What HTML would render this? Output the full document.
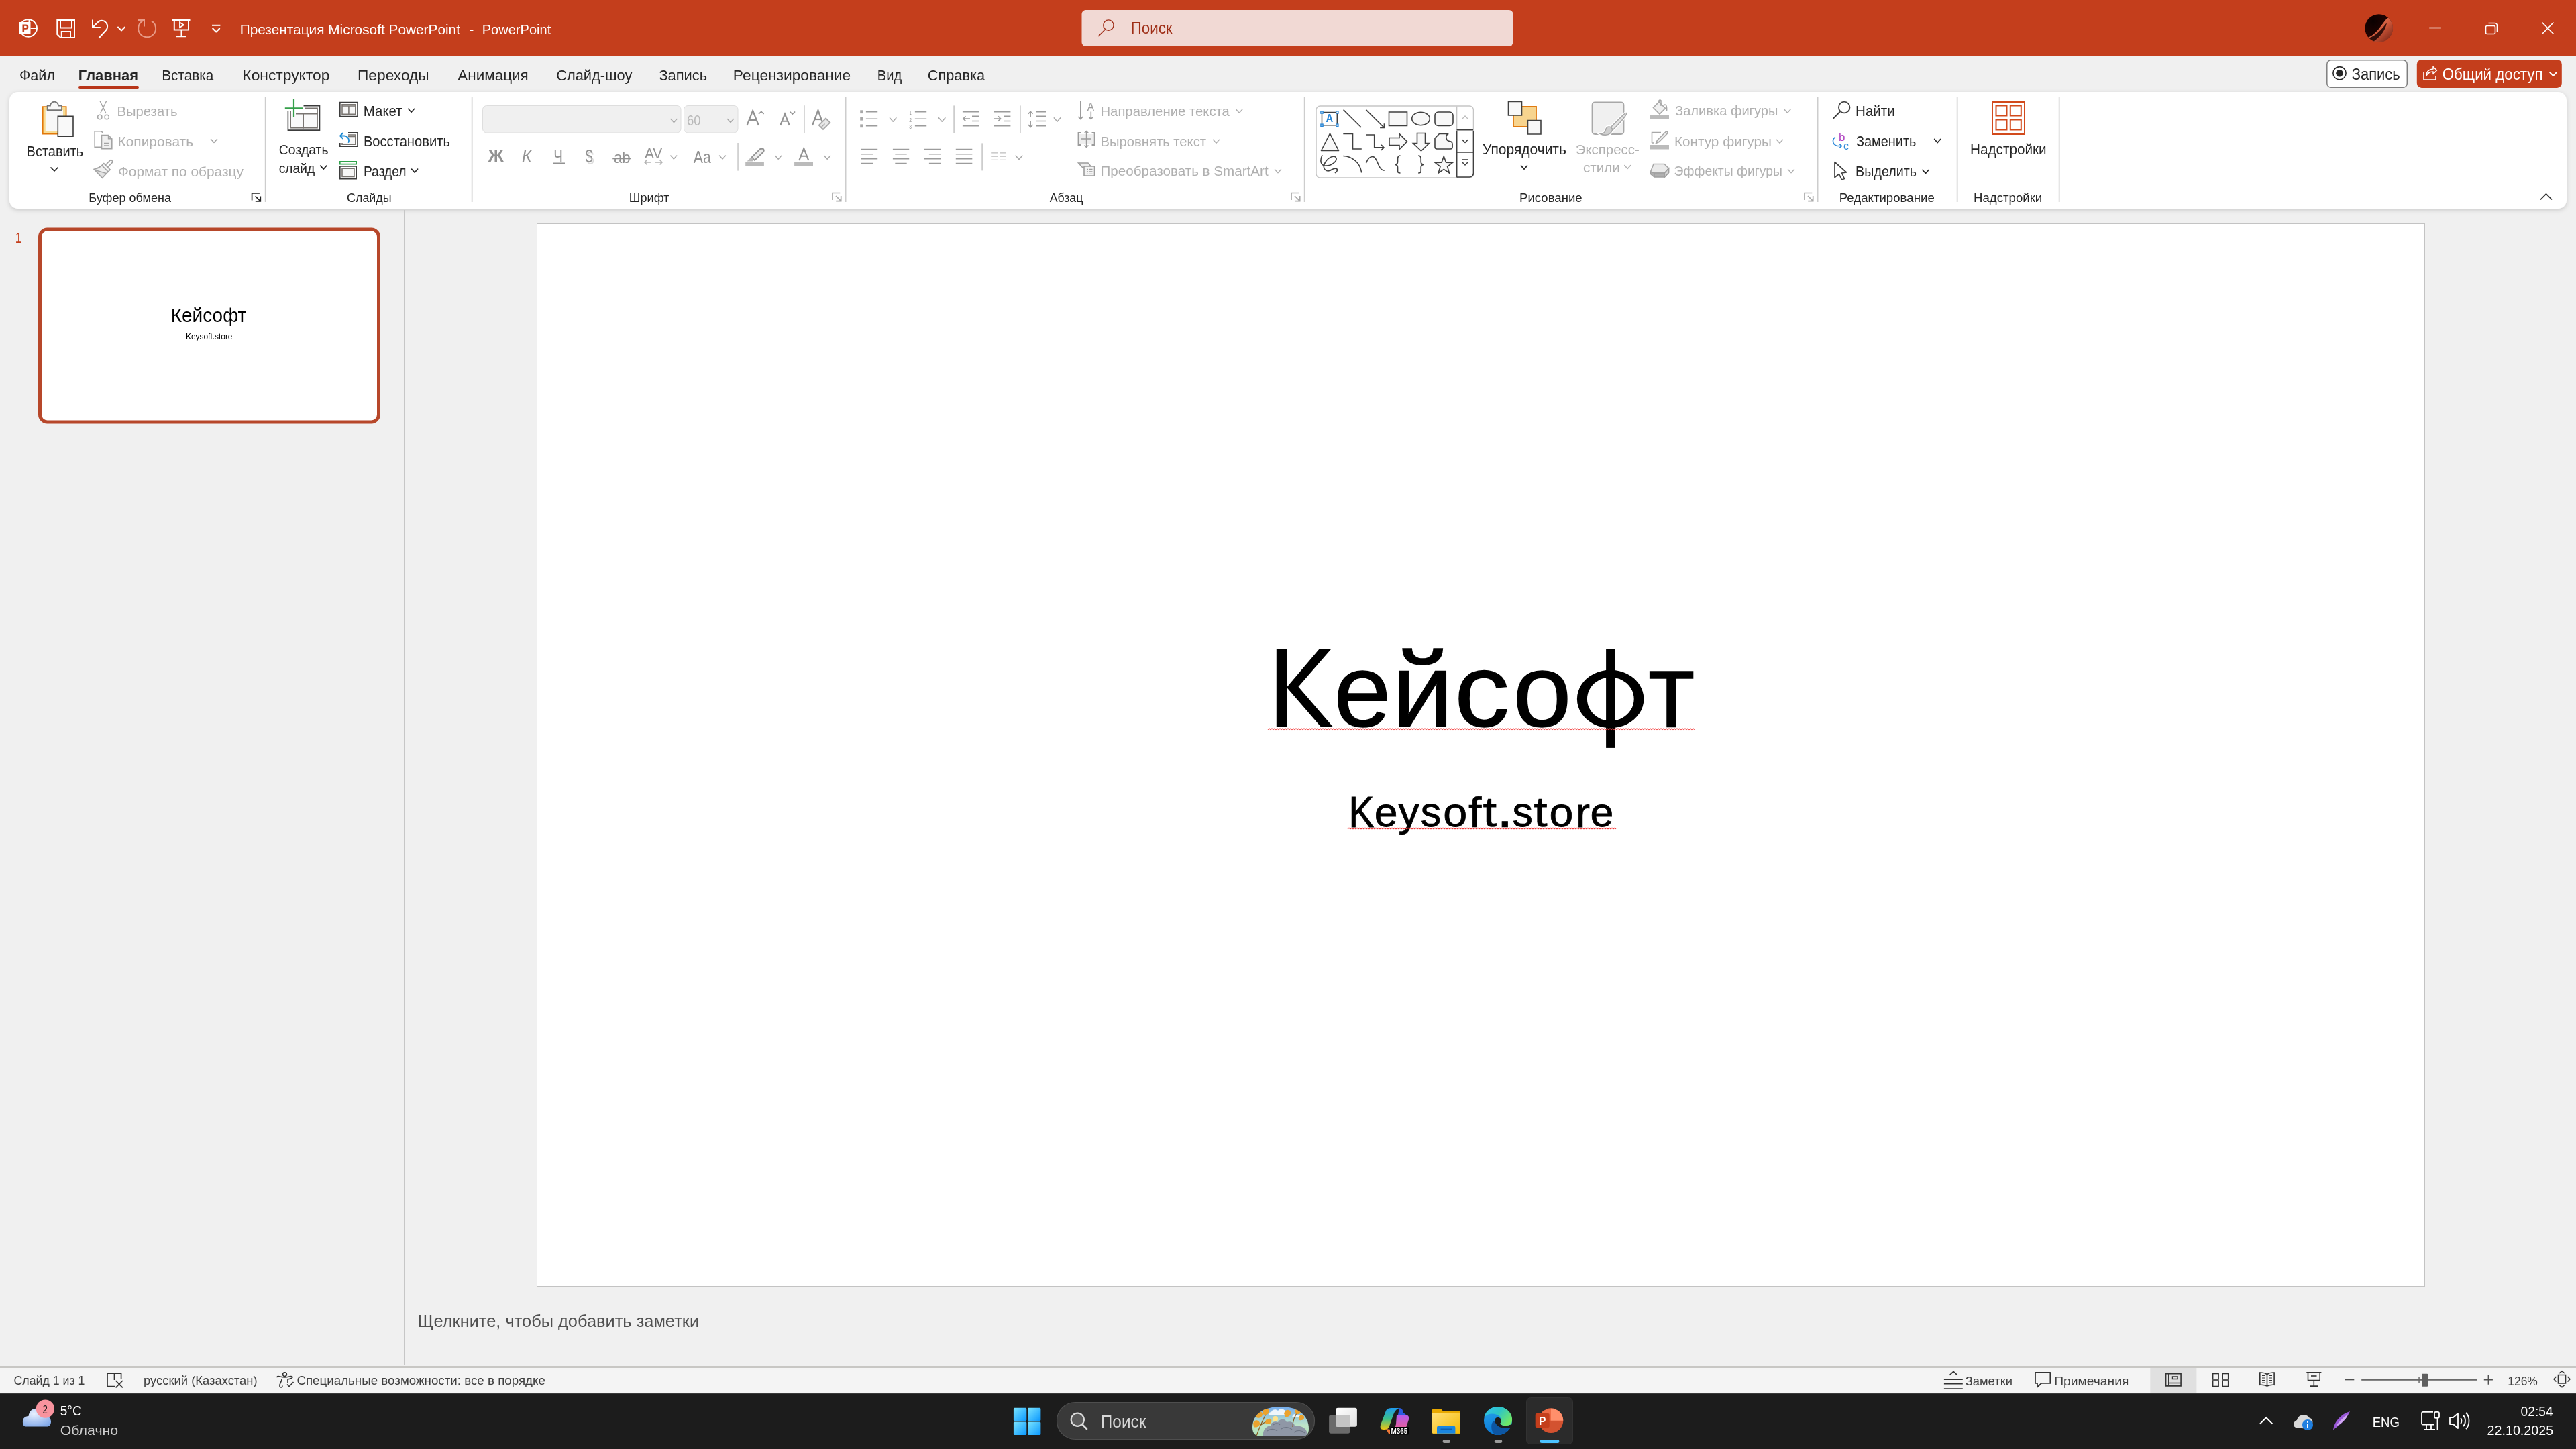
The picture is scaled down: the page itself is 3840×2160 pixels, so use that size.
<!DOCTYPE html>
<html><head><meta charset="utf-8"><style>
html,body{margin:0;padding:0;width:3840px;height:2160px;overflow:hidden;background:#F0F0F0}
svg{display:block;font-family:"Liberation Sans",sans-serif;will-change:transform}
</style></head><body>
<svg width="3840" height="2160" viewBox="0 0 3840 2160">
<defs>
<filter id="sh" x="-2%" y="-20%" width="104%" height="150%"><feDropShadow dx="0" dy="2" stdDeviation="3" flood-color="#000" flood-opacity="0.18"/></filter>
</defs>
<rect x="0" y="0" width="3840" height="2160" fill="#F0F0F0"/>
<rect x="0" y="0" width="3840" height="84" fill="#C43E1C"/>
<rect x="14" y="137" width="3812" height="174" rx="13" fill="#FFFFFF" filter="url(#sh)"/>
<rect x="602" y="313" width="1" height="1722" fill="#C6C6C6"/>
<rect x="800.5" y="333.5" width="2814" height="1584" fill="#FFFFFF" stroke="#C3C3C3" stroke-width="1"/>
<rect x="605" y="1942" width="3235" height="1" fill="#D2D2D2"/>
<rect x="0" y="2037" width="3840" height="2" fill="#C8C7C4"/>
<rect x="0" y="2039" width="3840" height="37" fill="#F4F4F4"/>
<rect x="0" y="2076" width="3840" height="84" fill="#1C1C1C"/>
<rect x="0" y="2076" width="3840" height="2" fill="#3A3A3A"/>
<text x="357.71" y="51.00" font-size="21" fill="#FFFFFF" textLength="328.29" lengthAdjust="spacingAndGlyphs">Презентация Microsoft PowerPoint</text>
<text x="700.00" y="51.00" font-size="21" fill="#FFFFFF" textLength="6.20" lengthAdjust="spacingAndGlyphs">-</text>
<text x="718.75" y="51.00" font-size="21" fill="#FFFFFF" textLength="102.47" lengthAdjust="spacingAndGlyphs">PowerPoint</text>
<rect x="1612.5" y="15" width="643" height="54" fill="#F1D9D4" rx="6"/>
<text x="1685.73" y="50.00" font-size="23" fill="#9E2E16" textLength="61.84" lengthAdjust="spacingAndGlyphs">Поиск</text>
<text x="28.90" y="119.70" font-size="22" fill="#262626" textLength="53.18" lengthAdjust="spacingAndGlyphs">Файл</text>
<text x="116.80" y="119.70" font-size="22" fill="#262626" font-weight="700" textLength="89.18" lengthAdjust="spacingAndGlyphs">Главная</text>
<text x="241.26" y="119.70" font-size="22" fill="#262626" textLength="77.09" lengthAdjust="spacingAndGlyphs">Вставка</text>
<text x="361.36" y="119.70" font-size="22" fill="#262626" textLength="129.99" lengthAdjust="spacingAndGlyphs">Конструктор</text>
<text x="532.97" y="119.70" font-size="22" fill="#262626" textLength="106.74" lengthAdjust="spacingAndGlyphs">Переходы</text>
<text x="682.32" y="119.70" font-size="22" fill="#262626" textLength="105.47" lengthAdjust="spacingAndGlyphs">Анимация</text>
<text x="829.20" y="119.70" font-size="22" fill="#262626" textLength="113.17" lengthAdjust="spacingAndGlyphs">Слайд-шоу</text>
<text x="982.40" y="119.70" font-size="22" fill="#262626" textLength="71.79" lengthAdjust="spacingAndGlyphs">Запись</text>
<text x="1092.87" y="119.70" font-size="22" fill="#262626" textLength="175.32" lengthAdjust="spacingAndGlyphs">Рецензирование</text>
<text x="1307.79" y="119.70" font-size="22" fill="#262626" textLength="36.34" lengthAdjust="spacingAndGlyphs">Вид</text>
<text x="1382.80" y="119.70" font-size="22" fill="#262626" textLength="85.22" lengthAdjust="spacingAndGlyphs">Справка</text>
<rect x="117" y="128" width="90" height="4" fill="#B8361A" rx="2"/>
<rect x="3468.8" y="89.8" width="119.5" height="40.5" fill="#FFFFFF" rx="6" stroke="#7E7E7E" stroke-width="1.5"/>
<rect x="3602.8" y="88.9" width="216" height="42" fill="#C43E1C" rx="7"/>
<text x="39.59" y="233.40" font-size="22" fill="#262626" textLength="84.65" lengthAdjust="spacingAndGlyphs">Вставить</text>
<text x="174.54" y="173.30" font-size="21" fill="#B0B0B0" textLength="89.95" lengthAdjust="spacingAndGlyphs">Вырезать</text>
<text x="175.50" y="217.70" font-size="21" fill="#B0B0B0" textLength="112.57" lengthAdjust="spacingAndGlyphs">Копировать</text>
<text x="176.00" y="262.80" font-size="21" fill="#B0B0B0" textLength="186.82" lengthAdjust="spacingAndGlyphs">Формат по образцу</text>
<text x="132.35" y="300.90" font-size="19" fill="#262626" textLength="122.70" lengthAdjust="spacingAndGlyphs">Буфер обмена</text>
<text x="415.80" y="229.70" font-size="21" fill="#262626" textLength="73.83" lengthAdjust="spacingAndGlyphs">Создать</text>
<text x="415.80" y="257.50" font-size="21" fill="#262626" textLength="53.27" lengthAdjust="spacingAndGlyphs">слайд</text>
<text x="541.87" y="173.10" font-size="22" fill="#262626" textLength="57.75" lengthAdjust="spacingAndGlyphs">Макет</text>
<text x="541.88" y="218.10" font-size="22" fill="#262626" textLength="129.00" lengthAdjust="spacingAndGlyphs">Восстановить</text>
<text x="541.92" y="262.80" font-size="22" fill="#262626" textLength="63.71" lengthAdjust="spacingAndGlyphs">Раздел</text>
<text x="517.00" y="300.90" font-size="19" fill="#262626" textLength="66.69" lengthAdjust="spacingAndGlyphs">Слайды</text>
<text x="937.74" y="300.90" font-size="19" fill="#262626" textLength="59.79" lengthAdjust="spacingAndGlyphs">Шрифт</text>
<text x="1564.63" y="300.90" font-size="19" fill="#262626" textLength="49.73" lengthAdjust="spacingAndGlyphs">Абзац</text>
<text x="1640.43" y="172.70" font-size="21" fill="#B0B0B0" textLength="192.48" lengthAdjust="spacingAndGlyphs">Направление текста</text>
<text x="1640.44" y="217.60" font-size="21" fill="#B0B0B0" textLength="157.67" lengthAdjust="spacingAndGlyphs">Выровнять текст</text>
<text x="1640.42" y="262.30" font-size="21" fill="#B0B0B0" textLength="250.32" lengthAdjust="spacingAndGlyphs">Преобразовать в SmartArt</text>
<text x="2210.00" y="230.00" font-size="22" fill="#262626" textLength="124.93" lengthAdjust="spacingAndGlyphs">Упорядочить</text>
<text x="2348.80" y="230.00" font-size="21" fill="#B0B0B0" textLength="94.96" lengthAdjust="spacingAndGlyphs">Экспресс-</text>
<text x="2360.00" y="257.00" font-size="21" fill="#B0B0B0" textLength="54.83" lengthAdjust="spacingAndGlyphs">стили</text>
<text x="2497.00" y="172.40" font-size="21" fill="#B0B0B0" textLength="153.36" lengthAdjust="spacingAndGlyphs">Заливка фигуры</text>
<text x="2496.01" y="217.80" font-size="21" fill="#B0B0B0" textLength="144.83" lengthAdjust="spacingAndGlyphs">Контур фигуры</text>
<text x="2495.60" y="261.70" font-size="21" fill="#B0B0B0" textLength="161.41" lengthAdjust="spacingAndGlyphs">Эффекты фигуры</text>
<text x="2265.02" y="300.90" font-size="19" fill="#262626" textLength="93.67" lengthAdjust="spacingAndGlyphs">Рисование</text>
<text x="2766.07" y="173.20" font-size="22" fill="#262626" textLength="58.66" lengthAdjust="spacingAndGlyphs">Найти</text>
<text x="2767.00" y="218.00" font-size="22" fill="#262626" textLength="89.39" lengthAdjust="spacingAndGlyphs">Заменить</text>
<text x="2766.11" y="263.00" font-size="22" fill="#262626" textLength="90.84" lengthAdjust="spacingAndGlyphs">Выделить</text>
<text x="2741.72" y="300.90" font-size="19" fill="#262626" textLength="142.04" lengthAdjust="spacingAndGlyphs">Редактирование</text>
<text x="2937.06" y="229.50" font-size="22" fill="#262626" textLength="113.62" lengthAdjust="spacingAndGlyphs">Надстройки</text>
<text x="2942.02" y="300.90" font-size="19" fill="#262626" textLength="102.23" lengthAdjust="spacingAndGlyphs">Надстройки</text>
<rect x="394.8" y="145" width="1.7" height="156" fill="#CDCDCD"/>
<rect x="702.8" y="145" width="1.7" height="156" fill="#CDCDCD"/>
<rect x="1259.8" y="145" width="1.7" height="156" fill="#CDCDCD"/>
<rect x="1943.8" y="145" width="1.7" height="156" fill="#CDCDCD"/>
<rect x="2708.8" y="145" width="1.7" height="156" fill="#CDCDCD"/>
<rect x="2916.8" y="145" width="1.7" height="156" fill="#CDCDCD"/>
<rect x="3068.8" y="145" width="1.7" height="156" fill="#CDCDCD"/>
<rect x="59.5" y="342" width="505" height="287" rx="11" fill="#FFFFFF" stroke="#B7472A" stroke-width="5"/>
<text x="22.81" y="361.70" font-size="22" fill="#C43E1C" textLength="9.69" lengthAdjust="spacingAndGlyphs">1</text>
<text x="254.73" y="479.70" font-size="30" fill="#000000" textLength="112.69" lengthAdjust="spacingAndGlyphs">Кейсофт</text>
<text x="277.00" y="505.50" font-size="13" fill="#000000" textLength="69.49" lengthAdjust="spacingAndGlyphs">Keysoft.store</text>
<path d="M1902.8,967.9 H1918.8 V1023.7 L1966.2,967.9 H1983.9 L1935.5,1023.7 L1987.4,1083.9 H1969.4 L1918.8,1025.6 V1083.9 H1902.8 Z" fill="#000"/>
<path d="M2400.65,998.7 A49.75,43.25 0 1 1 2400.64,998.7 Z M2400.8,1009.6 A34.9,32.45 0 1 0 2400.81,1009.6 Z" fill="#000" fill-rule="evenodd"/>
<rect x="2394.1" y="967.9" width="13.4" height="147" fill="#000"/>
<text transform="translate(1988.19,1082.95) scale(0.7677,0.7736)" x="0" y="0" font-size="200" fill="#000" stroke="#000" stroke-width="1.82">е</text>
<text transform="translate(2074.20,1083.30) scale(0.8286,0.7826)" x="0" y="0" font-size="200" fill="#000" stroke="#000" stroke-width="1.69">й</text>
<text transform="translate(2168.00,1082.95) scale(0.8221,0.7736)" x="0" y="0" font-size="200" fill="#000" stroke="#000" stroke-width="1.70">с</text>
<text transform="translate(2255.33,1082.95) scale(0.7842,0.7736)" x="0" y="0" font-size="200" fill="#000" stroke="#000" stroke-width="1.79">о</text>
<text transform="translate(2456.93,1083.30) scale(0.7553,0.7792)" x="0" y="0" font-size="200" fill="#000" stroke="#000" stroke-width="1.85">т</text>
<text transform="translate(2010.46,1232.60) scale(0.2835,0.3268)" x="0" y="0" font-size="200" fill="#000" stroke="#000" stroke-width="2.82">K</text>
<text transform="translate(2048.68,1232.28) scale(0.3129,0.3091)" x="0" y="0" font-size="200" fill="#000" stroke="#000" stroke-width="2.56">e</text>
<text transform="translate(2084.59,1231.47) scale(0.3122,0.3054)" x="0" y="0" font-size="200" fill="#000" stroke="#000" stroke-width="2.56">y</text>
<text transform="translate(2117.67,1232.28) scale(0.3046,0.3119)" x="0" y="0" font-size="200" fill="#000" stroke="#000" stroke-width="2.63">s</text>
<text transform="translate(2151.21,1232.28) scale(0.3232,0.3091)" x="0" y="0" font-size="200" fill="#000" stroke="#000" stroke-width="2.48">o</text>
<text transform="translate(2188.96,1232.60) scale(0.3472,0.3110)" x="0" y="0" font-size="200" fill="#000" stroke="#000" stroke-width="2.30">f</text>
<text transform="translate(2210.48,1232.27) scale(0.3725,0.3160)" x="0" y="0" font-size="200" fill="#000" stroke="#000" stroke-width="2.15">t</text>
<text transform="translate(2230.94,1232.90) scale(0.4421,0.3905)" x="0" y="0" font-size="200" fill="#000" stroke="#000" stroke-width="1.81">.</text>
<text transform="translate(2254.38,1232.28) scale(0.3034,0.3119)" x="0" y="0" font-size="200" fill="#000" stroke="#000" stroke-width="2.64">s</text>
<text transform="translate(2286.30,1232.27) scale(0.3667,0.3160)" x="0" y="0" font-size="200" fill="#000" stroke="#000" stroke-width="2.18">t</text>
<text transform="translate(2309.62,1232.28) scale(0.3221,0.3091)" x="0" y="0" font-size="200" fill="#000" stroke="#000" stroke-width="2.48">o</text>
<text transform="translate(2348.64,1232.60) scale(0.3200,0.3148)" x="0" y="0" font-size="200" fill="#000" stroke="#000" stroke-width="2.50">r</text>
<text transform="translate(2370.57,1232.28) scale(0.3140,0.3091)" x="0" y="0" font-size="200" fill="#000" stroke="#000" stroke-width="2.55">e</text>
<path d="M1890,1087.55l2,-1.5 l2,1.5l2,-1.5 l2,1.5l2,-1.5 l2,1.5l2,-1.5 l2,1.5l2,-1.5 l2,1.5l2,-1.5 l2,1.5l2,-1.5 l2,1.5l2,-1.5 l2,1.5l2,-1.5 l2,1.5l2,-1.5 l2,1.5l2,-1.5 l2,1.5l2,-1.5 l2,1.5l2,-1.5 l2,1.5l2,-1.5 l2,1.5l2,-1.5 l2,1.5l2,-1.5 l2,1.5l2,-1.5 l2,1.5l2,-1.5 l2,1.5l2,-1.5 l2,1.5l2,-1.5 l2,1.5l2,-1.5 l2,1.5l2,-1.5 l2,1.5l2,-1.5 l2,1.5l2,-1.5 l2,1.5l2,-1.5 l2,1.5l2,-1.5 l2,1.5l2,-1.5 l2,1.5l2,-1.5 l2,1.5l2,-1.5 l2,1.5l2,-1.5 l2,1.5l2,-1.5 l2,1.5l2,-1.5 l2,1.5l2,-1.5 l2,1.5l2,-1.5 l2,1.5l2,-1.5 l2,1.5l2,-1.5 l2,1.5l2,-1.5 l2,1.5l2,-1.5 l2,1.5l2,-1.5 l2,1.5l2,-1.5 l2,1.5l2,-1.5 l2,1.5l2,-1.5 l2,1.5l2,-1.5 l2,1.5l2,-1.5 l2,1.5l2,-1.5 l2,1.5l2,-1.5 l2,1.5l2,-1.5 l2,1.5l2,-1.5 l2,1.5l2,-1.5 l2,1.5l2,-1.5 l2,1.5l2,-1.5 l2,1.5l2,-1.5 l2,1.5l2,-1.5 l2,1.5l2,-1.5 l2,1.5l2,-1.5 l2,1.5l2,-1.5 l2,1.5l2,-1.5 l2,1.5l2,-1.5 l2,1.5l2,-1.5 l2,1.5l2,-1.5 l2,1.5l2,-1.5 l2,1.5l2,-1.5 l2,1.5l2,-1.5 l2,1.5l2,-1.5 l2,1.5l2,-1.5 l2,1.5l2,-1.5 l2,1.5l2,-1.5 l2,1.5l2,-1.5 l2,1.5l2,-1.5 l2,1.5l2,-1.5 l2,1.5l2,-1.5 l2,1.5l2,-1.5 l2,1.5l2,-1.5 l2,1.5l2,-1.5 l2,1.5l2,-1.5 l2,1.5l2,-1.5 l2,1.5l2,-1.5 l2,1.5l2,-1.5 l2,1.5l2,-1.5 l2,1.5l2,-1.5 l2,1.5l2,-1.5 l2,1.5l2,-1.5 l2,1.5l2,-1.5 l2,1.5l2,-1.5 l2,1.5l2,-1.5 l2,1.5l2,-1.5 l2,1.5l2,-1.5 l2,1.5l2,-1.5 l2,1.5l2,-1.5 l2,1.5l2,-1.5 l2,1.5l2,-1.5 l2,1.5l2,-1.5 l2,1.5l2,-1.5 l2,1.5l2,-1.5 l2,1.5l2,-1.5 l2,1.5l2,-1.5 l2,1.5l2,-1.5 l2,1.5l2,-1.5 l2,1.5l2,-1.5 l2,1.5l2,-1.5 l2,1.5l2,-1.5 l2,1.5l2,-1.5 l2,1.5l2,-1.5 l2,1.5l2,-1.5 l2,1.5l2,-1.5 l2,1.5l2,-1.5 l2,1.5l2,-1.5 l2,1.5l2,-1.5 l2,1.5l2,-1.5 l2,1.5l2,-1.5 l2,1.5l2,-1.5 l2,1.5l2,-1.5 l2,1.5l2,-1.5 l2,1.5l2,-1.5 l2,1.5l2,-1.5 l2,1.5l2,-1.5 l2,1.5l2,-1.5 l2,1.5l2,-1.5 l2,1.5l2,-1.5 l2,1.5l2,-1.5 l2,1.5l2,-1.5 l2,1.5l2,-1.5 l2,1.5l2,-1.5 l2,1.5l2,-1.5 l2,1.5l2,-1.5 l2,1.5l2,-1.5 l2,1.5l2,-1.5 l2,1.5l2,-1.5 l2,1.5l2,-1.5 l2,1.5l2,-1.5 l2,1.5l2,-1.5 l2,1.5l2,-1.5 l2,1.5l2,-1.5 l2,1.5l2,-1.5 l2,1.5l2,-1.5 l2,1.5l2,-1.5 l2,1.5l2,-1.5 l2,1.5l2,-1.5 l2,1.5l2,-1.5 l2,1.5l2,-1.5 l2,1.5l2,-1.5 l2,1.5l2,-1.5 l2,1.5l2,-1.5 l2,1.5l2,-1.5 l2,1.5l2,-1.5 l2,1.5l2,-1.5 l2,1.5l2,-1.5 l2,1.5l2,-1.5 l2,1.5l2,-1.5 l2,1.5l2,-1.5 l2,1.5l2,-1.5 l2,1.5l2,-1.5 l2,1.5l2,-1.5 l2,1.5l2,-1.5 l2,1.5l2,-1.5 l2,1.5l2,-1.5 l2,1.5l2,-1.5 l2,1.5l2,-1.5 l2,1.5l2,-1.5 l2,1.5" fill="none" stroke="#F23C3C" stroke-width="1.2"/>
<path d="M2009,1235.75l2,-1.5 l2,1.5l2,-1.5 l2,1.5l2,-1.5 l2,1.5l2,-1.5 l2,1.5l2,-1.5 l2,1.5l2,-1.5 l2,1.5l2,-1.5 l2,1.5l2,-1.5 l2,1.5l2,-1.5 l2,1.5l2,-1.5 l2,1.5l2,-1.5 l2,1.5l2,-1.5 l2,1.5l2,-1.5 l2,1.5l2,-1.5 l2,1.5l2,-1.5 l2,1.5l2,-1.5 l2,1.5l2,-1.5 l2,1.5l2,-1.5 l2,1.5l2,-1.5 l2,1.5l2,-1.5 l2,1.5l2,-1.5 l2,1.5l2,-1.5 l2,1.5l2,-1.5 l2,1.5l2,-1.5 l2,1.5l2,-1.5 l2,1.5l2,-1.5 l2,1.5l2,-1.5 l2,1.5l2,-1.5 l2,1.5l2,-1.5 l2,1.5l2,-1.5 l2,1.5l2,-1.5 l2,1.5l2,-1.5 l2,1.5l2,-1.5 l2,1.5l2,-1.5 l2,1.5l2,-1.5 l2,1.5l2,-1.5 l2,1.5l2,-1.5 l2,1.5l2,-1.5 l2,1.5l2,-1.5 l2,1.5l2,-1.5 l2,1.5l2,-1.5 l2,1.5l2,-1.5 l2,1.5l2,-1.5 l2,1.5l2,-1.5 l2,1.5l2,-1.5 l2,1.5l2,-1.5 l2,1.5l2,-1.5 l2,1.5l2,-1.5 l2,1.5l2,-1.5 l2,1.5l2,-1.5 l2,1.5l2,-1.5 l2,1.5l2,-1.5 l2,1.5l2,-1.5 l2,1.5l2,-1.5 l2,1.5l2,-1.5 l2,1.5l2,-1.5 l2,1.5l2,-1.5 l2,1.5l2,-1.5 l2,1.5l2,-1.5 l2,1.5l2,-1.5 l2,1.5l2,-1.5 l2,1.5l2,-1.5 l2,1.5l2,-1.5 l2,1.5l2,-1.5 l2,1.5l2,-1.5 l2,1.5l2,-1.5 l2,1.5l2,-1.5 l2,1.5l2,-1.5 l2,1.5l2,-1.5 l2,1.5l2,-1.5 l2,1.5l2,-1.5 l2,1.5l2,-1.5 l2,1.5l2,-1.5 l2,1.5l2,-1.5 l2,1.5l2,-1.5 l2,1.5l2,-1.5 l2,1.5l2,-1.5 l2,1.5l2,-1.5 l2,1.5l2,-1.5 l2,1.5l2,-1.5 l2,1.5l2,-1.5 l2,1.5l2,-1.5 l2,1.5l2,-1.5 l2,1.5l2,-1.5 l2,1.5l2,-1.5 l2,1.5l2,-1.5 l2,1.5l2,-1.5 l2,1.5l2,-1.5 l2,1.5l2,-1.5 l2,1.5l2,-1.5 l2,1.5l2,-1.5 l2,1.5l2,-1.5 l2,1.5l2,-1.5 l2,1.5l2,-1.5 l2,1.5l2,-1.5 l2,1.5l2,-1.5 l2,1.5l2,-1.5 l2,1.5l2,-1.5 l2,1.5l2,-1.5 l2,1.5l2,-1.5 l2,1.5" fill="none" stroke="#F23C3C" stroke-width="1.2"/>
<text x="622.62" y="1978.20" font-size="26" fill="#505050" textLength="419.47" lengthAdjust="spacingAndGlyphs">Щелкните, чтобы добавить заметки</text>
<text x="20.50" y="2064.20" font-size="19" fill="#404040" textLength="105.85" lengthAdjust="spacingAndGlyphs">Слайд 1 из 1</text>
<text x="214.00" y="2064.20" font-size="19" fill="#404040" textLength="169.65" lengthAdjust="spacingAndGlyphs">русский (Казахстан)</text>
<text x="442.40" y="2064.20" font-size="19" fill="#404040" textLength="370.50" lengthAdjust="spacingAndGlyphs">Специальные возможности: все в порядке</text>
<text x="2929.70" y="2065.20" font-size="19" fill="#404040" textLength="70.25" lengthAdjust="spacingAndGlyphs">Заметки</text>
<text x="3062.19" y="2065.20" font-size="19" fill="#404040" textLength="111.23" lengthAdjust="spacingAndGlyphs">Примечания</text>
<rect x="3205.3" y="2039" width="69.1" height="37" fill="#E0E0E0"/>
<text x="3738.18" y="2065.20" font-size="19" fill="#404040" textLength="44.76" lengthAdjust="spacingAndGlyphs">126%</text>
<text x="89.80" y="2110.00" font-size="20" fill="#FFFFFF" textLength="31.75" lengthAdjust="spacingAndGlyphs">5°C</text>
<text x="89.80" y="2138.60" font-size="20" fill="#CCCCCC" textLength="86.27" lengthAdjust="spacingAndGlyphs">Облачно</text>
<rect x="1575.5" y="2090.5" width="384" height="55" rx="27.5" fill="#393939" stroke="#4E4E4E" stroke-width="1.2"/>
<text x="1640.86" y="2128.10" font-size="26" fill="#D6D6D6" textLength="67.44" lengthAdjust="spacingAndGlyphs">Поиск</text>
<rect x="2275.5" y="2083.5" width="69" height="69" fill="#2B2B2B" rx="6" stroke="#323232" stroke-width="1"/>
<text x="3536.72" y="2126.50" font-size="21" fill="#FFFFFF" textLength="40.14" lengthAdjust="spacingAndGlyphs">ENG</text>
<text x="3757.60" y="2110.70" font-size="21" fill="#FFFFFF" textLength="48.00" lengthAdjust="spacingAndGlyphs">02:54</text>
<text x="3707.60" y="2138.60" font-size="21" fill="#FFFFFF" textLength="98.50" lengthAdjust="spacingAndGlyphs">22.10.2025</text>
<path d="M42.2,29.3 A12.7,12.7 0 1 1 42.19,29.3" fill="none" stroke="#FFFFFF" stroke-width="2"/>
<path d="M28,33 H45.5 V50.7 H28 Z" fill="#FFFFFF"/>
<path d="M43.5,28.5 V33" fill="none" stroke="#FFFFFF" stroke-width="2"/>
<path d="M45.5,42 H55.6" fill="none" stroke="#FFFFFF" stroke-width="2"/>
<path d="M33.5,36.5 h5.2 a3.6,3.6 0 0 1 0,7.2 h-2.6 v3.8 h-2.6 Z M36.1,38.8 v2.6 h2.4 a1.3,1.3 0 0 0 0,-2.6 Z" fill="#C43E1C"/>
<path d="M85.3,30 H111 V56 H90.3 L85.3,51 Z" fill="none" stroke="#FFFFFF" stroke-width="2"/>
<path d="M90,30 V41.5 H107 V30" fill="none" stroke="#FFFFFF" stroke-width="2"/>
<path d="M91.8,56 V47 H105 V56" fill="none" stroke="#FFFFFF" stroke-width="2"/>
<path d="M138,29.5 V41 H149.8" fill="none" stroke="#FFFFFF" stroke-width="2"/>
<path d="M138.5,40.5 L146,33 A8.5,8.5 0 0 1 158,45 L147.5,56.5" fill="none" stroke="#FFFFFF" stroke-width="2"/>
<path d="M176.0,40.5 L181,45.5 L186.0,40.5" fill="none" stroke="#FFFFFF" stroke-width="2" stroke-linecap="round" stroke-linejoin="round"/>
<path d="M226,31.3 A13,13 0 1 1 214.5,30.2" fill="none" stroke="#E89A86" stroke-width="2"/>
<path d="M205,30 H215 V39.5" fill="none" stroke="#E89A86" stroke-width="2"/>
<path d="M257,30 H283.5" fill="none" stroke="#FFFFFF" stroke-width="2.2"/>
<path d="M259.8,30 V44.5 H281 V30" fill="none" stroke="#FFFFFF" stroke-width="2"/>
<path d="M268,33.5 L274,37.3 L268,41 Z" fill="none" stroke="#FFFFFF" stroke-width="1.8"/>
<path d="M270.5,44.5 V54.3 M262,54.3 H278" fill="none" stroke="#FFFFFF" stroke-width="2"/>
<path d="M316,37.8 H328.4" fill="none" stroke="#FFFFFF" stroke-width="2"/>
<path d="M317.2,42.5 L322.2,47.5 L327.2,42.5" fill="none" stroke="#FFFFFF" stroke-width="2" stroke-linecap="round" stroke-linejoin="round"/>
<circle cx="1652.4" cy="37.6" r="7.7" fill="none" stroke="#A0301A" stroke-width="1.4"/>
<path d="M1647,44.3 L1637.3,54" fill="none" stroke="#A0301A" stroke-width="1.5"/>
<defs><clipPath id="avc"><circle cx="3546.2" cy="42" r="20.8"/></clipPath><linearGradient id="av2" x1="0" y1="0" x2="1" y2="1"><stop offset="0" stop-color="#F2A07A"/><stop offset="0.5" stop-color="#D0583A"/><stop offset="1" stop-color="#5A1208"/></linearGradient><radialGradient id="av1" cx="0.3" cy="0.25" r="0.9"><stop offset="0" stop-color="#0A0000"/><stop offset="0.6" stop-color="#240402"/><stop offset="1" stop-color="#C86040"/></radialGradient></defs>
<g clip-path="url(#avc)"><rect x="3524" y="20" width="45" height="45" fill="url(#av1)"/>
<path d="M3526,57 C3540,54 3548,40 3556,30 C3560,25 3566,24 3570,26 V66 H3526 Z" fill="url(#av2)"/>
<path d="M3526,58 C3540,56 3550,44 3558,34 C3556,46 3546,58 3534,64 Z" fill="#1A0402" opacity="0.85"/></g>
<path d="M3621.2,41.5 H3638.9" fill="none" stroke="#FFFFFF" stroke-width="1.6"/>
<path d="M3707.5,38.5 h10 a2,2 0 0 1 2,2 v8 a2,2 0 0 1 -2,2 h-10 a2,2 0 0 1 -2,-2 v-8 a2,2 0 0 1 2,-2 Z" fill="none" stroke="#FFFFFF" stroke-width="1.6"/>
<path d="M3709.5,34.5 h9.5 a3.5,3.5 0 0 1 3.5,3.5 v9.5" fill="none" stroke="#FFFFFF" stroke-width="1.6"/>
<path d="M3789.5,33.5 L3806.5,50.5 M3806.5,33.5 L3789.5,50.5" fill="none" stroke="#FFFFFF" stroke-width="1.7"/>
<circle cx="3487.5" cy="109.2" r="9.6" fill="none" stroke="#262626" stroke-width="1.6"/>
<circle cx="3487.5" cy="109.2" r="5.3" fill="#262626"/>
<text x="3505.70" y="119.10" font-size="23" fill="#262626" textLength="72.05" lengthAdjust="spacingAndGlyphs">Запись</text>
<path d="M3613,108 V119 H3631 V113" fill="none" stroke="#FFFFFF" stroke-width="1.6"/>
<path d="M3617,113 C3617,106 3622,103 3627,103 V99.5 L3632.5,105 L3627,110.5 V107 C3622,107 3619,109 3617,113 Z" fill="none" stroke="#FFFFFF" stroke-width="1.5" stroke-linejoin="round"/>
<text x="3640.70" y="119.10" font-size="23" fill="#FFFFFF" textLength="149.82" lengthAdjust="spacingAndGlyphs">Общий доступ</text>
<path d="M3801.0,108.0 L3806,113.0 L3811.0,108.0" fill="none" stroke="#FFFFFF" stroke-width="1.8" stroke-linecap="round" stroke-linejoin="round"/>
<path d="M62.8,158.2 H99.5 V200.5 H62.8 Z" fill="#E2780A"/>
<path d="M64.6,160 H97.7 V198.7 H64.6 Z" fill="#F8DC94"/>
<path d="M67.8,164 H94 V195 H67.8 Z" fill="#F8F8F8"/>
<path d="M70.6,164.2 V157.6 H75 A6,6 0 0 1 87,157.6 H92 V164.2 Z" fill="#F8F8F8" stroke="#767676" stroke-width="1.7"/>
<path d="M86.3,173.2 H109 V203.1 H86.3 Z" fill="#F9F9F9" stroke="#3B3B3B" stroke-width="1.6"/>
<path d="M76.0,250.0 L81,255.0 L86.0,250.0" fill="none" stroke="#262626" stroke-width="1.7" stroke-linecap="round" stroke-linejoin="round"/>
<path d="M149,150.5 L158,169 M158.7,150.5 L149.5,169" fill="none" stroke="#A4A4A4" stroke-width="1.4"/>
<circle cx="148.8" cy="174.5" r="3.2" fill="none" stroke="#A4A4A4" stroke-width="1.4"/>
<circle cx="159.2" cy="174.5" r="3.2" fill="none" stroke="#A4A4A4" stroke-width="1.4"/>
<path d="M150.8,219.3 H141.2 V195.8 H151 L153.5,198" fill="none" stroke="#A4A4A4" stroke-width="1.6"/>
<path d="M151.5,201.5 H161.5 L166.8,206.8 V221.8 H151.5 Z" fill="#F0F0F0" stroke="#A4A4A4" stroke-width="1.6"/>
<path d="M161.5,201.5 V206.8 H166.8" fill="none" stroke="#A4A4A4" stroke-width="1.4"/>
<path d="M155,213.5 H163 M155,217 H163" fill="none" stroke="#A4A4A4" stroke-width="1.4"/>
<path d="M314.5,207.5 L319,212.5 L323.5,207.5" fill="none" stroke="#A4A4A4" stroke-width="1.5" stroke-linecap="round" stroke-linejoin="round"/>
<path d="M151.8,246.6 C148,250 144,251.5 140.2,252.4 L152.4,265.4 L161.2,256 Z" fill="#F0F0F0"/>
<path d="M141.5,253.5 L158.5,258.5 L152.4,265.4 Z" fill="#E2E2E2"/>
<path d="M157.2,246 L163.8,239.4 a2.3,2.3 0 0 1 3.25,3.25 L160.4,249.2" fill="none" stroke="#A4A4A4" stroke-width="1.6"/>
<path d="M154.8,243.6 L164.2,253 L161.2,256 L151.8,246.6 Z" fill="#F6F6F6" stroke="#A4A4A4" stroke-width="1.6"/>
<path d="M151.8,246.6 C148,250 144,251.5 140.2,252.4 L152.4,265.4 L161.2,256" fill="none" stroke="#A4A4A4" stroke-width="1.6"/>
<path d="M141.5,253.5 L158.5,258.5" fill="none" stroke="#A4A4A4" stroke-width="1.4"/>
<path d="M375.6,298.4 V287.9 H386.90000000000003 M380.6,292.4 L388.3,300.0 M388.3,292.4 V300.0 H380.8" fill="none" stroke="#222" stroke-width="1.7"/>
<path d="M1241,298.0 V287.5 H1252.3 M1246,292.0 L1253.7,299.6 M1253.7,292.0 V299.6 H1246.2" fill="none" stroke="#A8A8A8" stroke-width="1.7"/>
<path d="M1925,298.0 V287.5 H1936.3 M1930,292.0 L1937.7,299.6 M1937.7,292.0 V299.6 H1930.2" fill="none" stroke="#A8A8A8" stroke-width="1.7"/>
<path d="M2690,298.0 V287.5 H2701.3 M2695,292.0 L2702.7,299.6 M2702.7,292.0 V299.6 H2695.2" fill="none" stroke="#A8A8A8" stroke-width="1.7"/>
<path d="M432.4,169.6 H473.9 V191.6 H432.4 Z" fill="#F9F9F9"/>
<path d="M452.5,157.7 H476.5 V194.1 H429.4 V165" fill="none" stroke="#3C3C3C" stroke-width="1.6"/>
<path d="M454.5,161.4 H473.1 V190.8 H433.2 V166" fill="none" stroke="#7A7672" stroke-width="1.6"/>
<path d="M441,169.6 H473.9 M452.2,169.6 V191.6" fill="none" stroke="#7A7672" stroke-width="1.6"/>
<path d="M424.8,161.3 H451.7 M438,148 V174.5" fill="none" stroke="#34A04A" stroke-width="2.2"/>
<path d="M477.7,247.1 L482.2,252.1 L486.7,247.1" fill="none" stroke="#262626" stroke-width="1.6" stroke-linecap="round" stroke-linejoin="round"/>
<path d="M506.8,152.5 H533.0 V173.5 H506.8 Z" fill="#FFFFFF" stroke="#3C3C3C" stroke-width="1.6"/>
<path d="M510,155.7 H529.8 V170.3 H510 Z" fill="#F6F6F6" stroke="#7A7672" stroke-width="1.6"/>
<path d="M510,158 H529.8 M519.9,158 V170.3" fill="none" stroke="#7A7672" stroke-width="1.6"/>
<path d="M506.8,197.8 H533.0 V218.29999999999998 H506.8 Z" fill="#FFFFFF" stroke="#3C3C3C" stroke-width="1.6"/>
<path d="M510,201 H529.8 V215.1 H510 Z" fill="#F6F6F6" stroke="#7A7672" stroke-width="1.6"/>
<path d="M510,203.5 H529.8" fill="none" stroke="#7A7672" stroke-width="1.6"/>
<path d="M503,195 H519 V213 H503 Z" fill="#FFFFFF"/>
<path d="M519.5,212 A7,7 0 0 0 512.5,202.5 H507.5 M511,198.5 L507,202.5 L511,206.5" fill="none" stroke="#1E8BD5" stroke-width="1.8" stroke-linecap="round" stroke-linejoin="round"/>
<path d="M506.8,240.8 H531.2 V244.6 H506.8 Z" fill="none" stroke="#2FA34A" stroke-width="1.6"/>
<path d="M506.8,248.0 H531.2 V266.59999999999997 H506.8 Z" fill="#FFFFFF" stroke="#3C3C3C" stroke-width="1.6"/>
<path d="M510,251.2 H528 V263.4 H510 Z" fill="#F6F6F6" stroke="#7A7672" stroke-width="1.6"/>
<path d="M608.6,162.3 L613.1,167.3 L617.6,162.3" fill="none" stroke="#262626" stroke-width="1.6" stroke-linecap="round" stroke-linejoin="round"/>
<path d="M613.6,252.1 L618.1,257.1 L622.6,252.1" fill="none" stroke="#262626" stroke-width="1.6" stroke-linecap="round" stroke-linejoin="round"/>
<rect x="719.5" y="157.5" width="295.5" height="40.5" fill="#F0F0F0" rx="6" stroke="#DEDEDE" stroke-width="1"/>
<rect x="1019.5" y="157.5" width="80.5" height="40.5" fill="#F0F0F0" rx="6" stroke="#DEDEDE" stroke-width="1"/>
<path d="M1000.0,177.5 L1004.5,182.5 L1009.0,177.5" fill="none" stroke="#A8A8A8" stroke-width="1.4" stroke-linecap="round" stroke-linejoin="round"/>
<path d="M1084.5,177.5 L1089,182.5 L1093.5,177.5" fill="none" stroke="#A8A8A8" stroke-width="1.4" stroke-linecap="round" stroke-linejoin="round"/>
<text x="1024.00" y="187.00" font-size="22" fill="#B8B8B8" textLength="20.57" lengthAdjust="spacingAndGlyphs">60</text>
<path d="M1113.5,186.8 L1122.2,165 L1130.9,186.8 M1116.298,179.048 H1128.102" fill="none" stroke="#929292" stroke-width="2.2"/>
<path d="M1131,170 L1134.8,166.2 L1138.6,170" fill="none" stroke="#929292" stroke-width="1.5"/>
<path d="M1163.2,186.8 L1170.0,170 L1176.8,186.8 M1165.352,180.74800000000002 H1174.648" fill="none" stroke="#929292" stroke-width="2.2"/>
<path d="M1177.5,166.5 L1181.3,170.3 L1185.1,166.5" fill="none" stroke="#929292" stroke-width="1.5"/>
<rect x="1198.2" y="157.2" width="1.5" height="41.4" fill="#C8C8C8"/>
<path d="M1211,186.8 L1219.5,164.5 L1227,185" fill="none" stroke="#929292" stroke-width="2.2"/>
<path d="M1214.5,178 H1225" fill="none" stroke="#929292" stroke-width="2.2"/>
<path d="M1231,176.5 L1237.3,182.8 L1227,193 L1220.7,186.7 Z" fill="#E8E8E8" stroke="#A8A8A8" stroke-width="1.8"/>
<path d="M1224,190 L1229.5,184.5" fill="none" stroke="#A8A8A8" stroke-width="1.4"/>
<text x="727.72" y="241.10" font-size="25" fill="#929292" font-weight="700" textLength="22.99" lengthAdjust="spacingAndGlyphs">Ж</text>
<text x="778.10" y="241.10" font-size="25" fill="#929292" font-style="italic" textLength="14.55" lengthAdjust="spacingAndGlyphs">К</text>
<text x="825.18" y="241.10" font-size="25" fill="#929292" textLength="13.67" lengthAdjust="spacingAndGlyphs">Ч</text>
<rect x="824" y="242.5" width="18" height="2" fill="#929292"/>
<text x="874.35" y="244.80" font-size="27" fill="#DCDCDC" textLength="11.66" lengthAdjust="spacingAndGlyphs">S</text>
<text x="872.25" y="242.30" font-size="27" fill="#929292" textLength="11.66" lengthAdjust="spacingAndGlyphs">S</text>
<text x="915.00" y="242.80" font-size="24" fill="#929292" textLength="24.65" lengthAdjust="spacingAndGlyphs">ab</text>
<path d="M913.2,236.4 H940.8" fill="none" stroke="#929292" stroke-width="1.8"/>
<text x="961.04" y="235.80" font-size="22" fill="#929292" textLength="26.19" lengthAdjust="spacingAndGlyphs">AV</text>
<path d="M961,241.9 H971 M964.5,238.4 L961,241.9 L964.5,245.4 M977,241.9 H987 M983.5,238.4 L987,241.9 L983.5,245.4" fill="none" stroke="#B4B4B4" stroke-width="1.5"/>
<path d="M999.8,232.0 L1004.3,237.0 L1008.8,232.0" fill="none" stroke="#A8A8A8" stroke-width="1.4" stroke-linecap="round" stroke-linejoin="round"/>
<text x="1033.85" y="243.00" font-size="25" fill="#929292" textLength="25.96" lengthAdjust="spacingAndGlyphs">Aa</text>
<path d="M1072.5,232.0 L1077,237.0 L1081.5,232.0" fill="none" stroke="#A8A8A8" stroke-width="1.4" stroke-linecap="round" stroke-linejoin="round"/>
<rect x="1099.3" y="213" width="1.5" height="41.6" fill="#C8C8C8"/>
<path d="M1136,221.5 a2.8,2.8 0 0 1 1.8,5 L1125,239 L1120.5,234.5 L1133,222 Z" fill="#EEEEEE" stroke="#929292" stroke-width="1.8"/>
<path d="M1120,234.5 L1124,238.5 L1121.5,240.5 H1113.5 L1117.5,236.5 Z" fill="#BBBBBB"/>
<rect x="1111.2" y="241" width="27.7" height="6.8" fill="#BBBBBB"/>
<path d="M1155.7,232.2 L1160.2,237.2 L1164.7,232.2" fill="none" stroke="#A8A8A8" stroke-width="1.4" stroke-linecap="round" stroke-linejoin="round"/>
<path d="M1191.3,239.2 L1198.3,221.2 L1205.3,239.2 M1193.52,232.73999999999998 H1203.08" fill="none" stroke="#929292" stroke-width="2.2"/>
<rect x="1184.1" y="241" width="27.9" height="6.8" fill="#BBBBBB"/>
<path d="M1228.7,232.2 L1233.2,237.2 L1237.7,232.2" fill="none" stroke="#A8A8A8" stroke-width="1.4" stroke-linecap="round" stroke-linejoin="round"/>
<rect x="1282.2" y="164.29999999999998" width="4.8" height="4.8" fill="#A8A8A8"/>
<rect x="1282.2" y="174.79999999999998" width="4.8" height="4.8" fill="#A8A8A8"/>
<rect x="1282.2" y="185.4" width="4.8" height="4.8" fill="#A8A8A8"/>
<path d="M1290.9,166.7 H1308.2 M1290.9,177.2 H1308.2 M1290.9,187.8 H1308.2" fill="none" stroke="#9C9C9C" stroke-width="1.6"/>
<path d="M1326.4,175.7 L1331.2,181.3 L1336.0,175.7" fill="none" stroke="#A8A8A8" stroke-width="1.4" stroke-linecap="round" stroke-linejoin="round"/>
<text x="1355.60" y="171.00" font-size="9.5" fill="#9C9C9C" textLength="3.27" lengthAdjust="spacingAndGlyphs">1</text>
<text x="1355.20" y="181.50" font-size="9.5" fill="#9C9C9C" textLength="3.80" lengthAdjust="spacingAndGlyphs">2</text>
<text x="1355.20" y="192.00" font-size="9.5" fill="#9C9C9C" textLength="3.80" lengthAdjust="spacingAndGlyphs">3</text>
<path d="M1363.9,166.7 H1381.2 M1363.9,177.2 H1381.2 M1363.9,187.8 H1381.2" fill="none" stroke="#9C9C9C" stroke-width="1.6"/>
<path d="M1399.4,175.7 L1404.2,181.3 L1409.0,175.7" fill="none" stroke="#A8A8A8" stroke-width="1.4" stroke-linecap="round" stroke-linejoin="round"/>
<rect x="1421.3" y="157.4" width="1.6" height="41.3" fill="#C8C8C8"/>
<path d="M1434.9,166.7 H1459.1 M1434.9,187.8 H1459.1" fill="none" stroke="#9C9C9C" stroke-width="1.6"/>
<path d="M1449,173.4 H1459.1 M1449,180.5 H1459.1" fill="none" stroke="#9C9C9C" stroke-width="1.6"/>
<path d="M1446,176.9 H1436 M1439.5,173.2 L1435.8,176.9 L1439.5,180.6" fill="none" stroke="#9C9C9C" stroke-width="1.5"/>
<path d="M1481.6,166.7 H1506.4 M1481.6,187.8 H1506.4" fill="none" stroke="#9C9C9C" stroke-width="1.6"/>
<path d="M1496.3,173.4 H1506.4 M1496.3,180.5 H1506.4" fill="none" stroke="#9C9C9C" stroke-width="1.6"/>
<path d="M1481.6,176.9 H1491.2 M1488,173.2 L1491.7,176.9 L1488,180.6" fill="none" stroke="#9C9C9C" stroke-width="1.5"/>
<rect x="1520.1" y="157.4" width="1.6" height="41.3" fill="#C8C8C8"/>
<path d="M1544.1,166.7 H1559.9 M1544.1,173.4 H1559.9 M1544.1,180.5 H1559.9 M1544.1,187.8 H1559.9" fill="none" stroke="#9C9C9C" stroke-width="1.6"/>
<path d="M1536.2,166.5 V175 M1532.8,169.8 L1536.2,166.3 L1539.6,169.8 M1536.2,180.5 V189.5 M1532.8,186 L1536.2,189.6 L1539.6,186" fill="none" stroke="#9C9C9C" stroke-width="1.5"/>
<path d="M1571.2,175.7 L1576,181.3 L1580.8,175.7" fill="none" stroke="#A8A8A8" stroke-width="1.4" stroke-linecap="round" stroke-linejoin="round"/>
<path d="M1283.7,222.6 H1308.2 M1283.7,229.7 H1301.1 M1283.7,236.7 H1308.2 M1283.7,243.6 H1301.1" fill="none" stroke="#9C9C9C" stroke-width="1.6"/>
<path d="M1330.9,222.6 H1355.2 M1334.3,229.7 H1351.7 M1330.9,236.7 H1355.2 M1334.3,243.6 H1351.7" fill="none" stroke="#9C9C9C" stroke-width="1.6"/>
<path d="M1377.9,222.6 H1402.2 M1384.9,229.7 H1402.2 M1377.9,236.7 H1402.2 M1384.9,243.6 H1402.2" fill="none" stroke="#9C9C9C" stroke-width="1.6"/>
<path d="M1424.8,222.6 H1449.3 M1424.8,229.7 H1449.3 M1424.8,236.7 H1449.3 M1424.8,243.6 H1449.3" fill="none" stroke="#9C9C9C" stroke-width="1.6"/>
<rect x="1463.3" y="213.4" width="1.6" height="41" fill="#C8C8C8"/>
<path d="M1478.2,227.9 H1487.4 M1478.2,233 H1487.4 M1478.2,238.4 H1487.4 M1490.6,227.9 H1499.7 M1490.6,233 H1499.7 M1490.6,238.4 H1499.7" fill="none" stroke="#BDBDBD" stroke-width="1.4"/>
<path d="M1514.1,232.0 L1519,237.8 L1523.9,232.0" fill="none" stroke="#A8A8A8" stroke-width="1.4" stroke-linecap="round" stroke-linejoin="round"/>
<path d="M1610.8,150.8 V177.5 M1607.3,174 L1610.8,177.5 L1614.3,174" fill="none" stroke="#9C9C9C" stroke-width="1.6"/>
<path d="M1626.3,166.5 V177.5 M1622.8,174 L1626.3,177.5 L1629.8,174" fill="none" stroke="#9C9C9C" stroke-width="1.6"/>
<text x="1620.70" y="164.50" font-size="17" fill="#9C9C9C" textLength="10.21" lengthAdjust="spacingAndGlyphs">A</text>
<path d="M1842.8,163.3 L1847.3,168.3 L1851.8,163.3" fill="none" stroke="#B0B0B0" stroke-width="1.4" stroke-linecap="round" stroke-linejoin="round"/>
<path d="M1611.5,198 H1607.5 V216 H1611.5 M1627.5,198 H1631.5 V216 H1627.5" fill="none" stroke="#9C9C9C" stroke-width="1.8"/>
<path d="M1609,200 H1630 V214 H1609 Z" fill="#EEEEEE"/>
<path d="M1619.5,195.5 V219.5 M1616.5,198.5 L1619.5,195.5 L1622.5,198.5 M1616.5,216.5 L1619.5,219.5 L1622.5,216.5 M1612,207 H1627" fill="none" stroke="#9C9C9C" stroke-width="1.4"/>
<path d="M1808.5,208.3 L1813,213.3 L1817.5,208.3" fill="none" stroke="#B0B0B0" stroke-width="1.4" stroke-linecap="round" stroke-linejoin="round"/>
<path d="M1607.5,243 H1622 L1628,250 H1614 Z" fill="#EEEEEE" stroke="#9C9C9C" stroke-width="1.5"/>
<path d="M1616,248 H1631.5 V262 H1616 Z" fill="#F4F4F4" stroke="#9C9C9C" stroke-width="1.6"/>
<path d="M1620,252.5 H1622 M1624,252.5 H1628.5 M1620,256 H1622 M1624,256 H1628.5 M1620,259.3 H1622 M1624,259.3 H1628.5" fill="none" stroke="#9C9C9C" stroke-width="1.3"/>
<path d="M1900.5,252.8 L1905,257.8 L1909.5,252.8" fill="none" stroke="#B0B0B0" stroke-width="1.4" stroke-linecap="round" stroke-linejoin="round"/>
<rect x="1962" y="158" width="234.5" height="107" fill="#FFFFFF" rx="6" stroke="#C6C6C6" stroke-width="1.5"/>
<path d="M2171.6,158.5 V264.5" fill="none" stroke="#C6C6C6" stroke-width="1.5"/>
<path d="M2171.6,193.6 H2196 M2171.6,227 H2196" fill="none" stroke="#404040" stroke-width="1.6"/>
<path d="M2171.6,195 V264.5" fill="none" stroke="#404040" stroke-width="1.6"/>
<path d="M2196.5,195 V258 a6,6 0 0 1 -6,6 H2172" fill="none" stroke="#404040" stroke-width="1.6"/>
<path d="M2179.5,177.5 L2184,173 L2188.5,177.5" fill="none" stroke="#BDBDBD" stroke-width="1.4"/>
<path d="M2180.0,208.5 L2184,212.5 L2188.0,208.5" fill="none" stroke="#404040" stroke-width="1.6" stroke-linecap="round" stroke-linejoin="round"/>
<path d="M2179.5,238 H2188.5" fill="none" stroke="#404040" stroke-width="1.6"/>
<path d="M2180.0,242.0 L2184,246.0 L2188.0,242.0" fill="none" stroke="#404040" stroke-width="1.6" stroke-linecap="round" stroke-linejoin="round"/>
<path d="M1970.5,167.5 H1993.3 V186.7 H1970.5 Z" fill="none" stroke="#404040" stroke-width="1.5"/>
<rect x="1968.2" y="165.2" width="4.6" height="4.6" fill="#2B88D8"/><rect x="1969.6" y="166.6" width="1.8" height="1.8" fill="#FFFFFF"/>
<rect x="1991.0" y="165.2" width="4.6" height="4.6" fill="#2B88D8"/><rect x="1992.3999999999999" y="166.6" width="1.8" height="1.8" fill="#FFFFFF"/>
<rect x="1968.2" y="184.39999999999998" width="4.6" height="4.6" fill="#2B88D8"/><rect x="1969.6" y="185.79999999999998" width="1.8" height="1.8" fill="#FFFFFF"/>
<rect x="1991.0" y="184.39999999999998" width="4.6" height="4.6" fill="#2B88D8"/><rect x="1992.3999999999999" y="185.79999999999998" width="1.8" height="1.8" fill="#FFFFFF"/>
<text x="1976.40" y="182.00" font-size="16" fill="#2B88D8" font-weight="700" textLength="10.70" lengthAdjust="spacingAndGlyphs">A</text>
<path d="M2002.6,163.6 L2029.2,190" fill="none" stroke="#404040" stroke-width="1.6"/>
<path d="M2036.3,163.6 L2063,190 M2063.4,184.2 V190.4 H2057.1" fill="none" stroke="#404040" stroke-width="1.6"/>
<path d="M2070.5,167 H2097.5 V187.5 H2070.5 Z" fill="#F8F8F8" stroke="#404040" stroke-width="1.6"/>
<ellipse cx="2118" cy="177" rx="13.3" ry="9.7" fill="#F8F8F8" stroke="#404040" stroke-width="1.6"/>
<rect x="2139" y="167" width="27" height="20.5" fill="#F8F8F8" rx="5" stroke="#404040" stroke-width="1.6"/>
<path d="M1969.5,224.5 L1982.5,199 L1995.5,224.5 Z" fill="#F8F8F8" stroke="#404040" stroke-width="1.6" stroke-linejoin="round"/>
<path d="M2002.3,199.5 H2016.5 V222 H2029.8" fill="none" stroke="#404040" stroke-width="1.6"/>
<path d="M2036.5,201 H2048.7 V219.9 H2063 M2059,215.9 L2063,219.9 L2059,223.9" fill="none" stroke="#404040" stroke-width="1.6"/>
<path d="M2071,205.5 H2086 V199.5 L2097.5,211 L2086,222.5 V216.5 H2071 Z" fill="#F8F8F8" stroke="#404040" stroke-width="1.6" stroke-linejoin="miter"/>
<path d="M2112.5,198.5 H2124.5 V213.5 H2130.5 L2118.5,225 L2106.5,213.5 H2112.5 Z" fill="#F8F8F8" stroke="#404040" stroke-width="1.6"/>
<path d="M2145.5,199.5 H2159.3 C2154,201 2155,210 2161,210.5 C2163.5,210.8 2165.1,212.5 2165.1,215 V219 a3,3 0 0 1 -3,3 H2142 a3,3 0 0 1 -3,-3 V206 Z" fill="#F8F8F8" stroke="#404040" stroke-width="1.6"/>
<path d="M1971,231 C1967,240 1969,246 1975,247 C1985,248 1993,240 1992,236 C1990,230 1980,234 1975,243 C1970,252 1978,258 1985,253 C1990,250 1995,251 1993,255 C1992,257 1991,257 1990,258" fill="none" stroke="#404040" stroke-width="1.6"/>
<path d="M2002.3,232.5 C2016,233 2028,243 2029.6,257.5" fill="none" stroke="#404040" stroke-width="1.6"/>
<path d="M2036.5,243 C2039,236 2043,233.5 2046,233.5 C2051,233.5 2053,242 2056,248 C2058,252 2060,254 2063.7,254.3" fill="none" stroke="#404040" stroke-width="1.6"/>
<path d="M2087.5,232 C2084,232 2083.5,234 2083.5,237 V241.5 C2083.5,244 2082,245 2079.5,245.3 C2082,245.6 2083.5,247 2083.5,249.5 V254 C2083.5,257 2084,258 2087.5,258" fill="none" stroke="#404040" stroke-width="1.7"/>
<path d="M2114.2,232 C2117.7,232 2118.2,234 2118.2,237 V241.5 C2118.2,244 2119.7,245 2122.2,245.3 C2119.7,245.6 2118.2,247 2118.2,249.5 V254 C2118.2,257 2117.7,258 2114.2,258" fill="none" stroke="#404040" stroke-width="1.7"/>
<path d="M2152.3,233 L2155.6,242.3 L2165.5,242.4 L2157.6,248.4 L2160.5,258 L2152.3,252.4 L2144.1,258 L2147,248.4 L2139.1,242.4 L2149,242.3 Z" fill="#F8F8F8" stroke="#404040" stroke-width="1.6" stroke-linejoin="miter"/>
<path d="M2256,159 H2290 V189 H2256 Z" fill="#F7D48E" stroke="#E07A10" stroke-width="1.8"/>
<path d="M2248.5,151.5 H2268.5 V172 H2248.5 Z" fill="#F8F8F8" stroke="#404040" stroke-width="1.6"/>
<path d="M2277.5,179.5 H2297 V200 H2277.5 Z" fill="#F8F8F8" stroke="#404040" stroke-width="1.6"/>
<path d="M2267.5,247.1 L2272,252.1 L2276.5,247.1" fill="none" stroke="#262626" stroke-width="1.7" stroke-linecap="round" stroke-linejoin="round"/>
<rect x="2373.5" y="152.5" width="47" height="47.5" fill="#F0F0F0" rx="4" stroke="#A8A8A8" stroke-width="1.8"/>
<path d="M2424.5,168.5 C2426,170 2417,181 2404.5,193.5 L2401,190 C2413,178 2423,167 2424.5,168.5 Z" fill="#FFFFFF" stroke="#FFFFFF" stroke-width="4.5"/>
<path d="M2401.5,189.8 C2397,187.5 2394,190 2393.5,194 C2393,197 2390,199 2385.5,199.5 C2390,202 2397,202 2400,199 C2403,196 2404,193 2402.8,191.5 Z" fill="#FFFFFF" stroke="#FFFFFF" stroke-width="4.5"/>
<path d="M2424.5,168.5 C2426,170 2417,181 2404.5,193.5 L2401,190 C2413,178 2423,167 2424.5,168.5 Z" fill="#E6E6E6" stroke="#A8A8A8" stroke-width="1.5"/>
<path d="M2401.5,189.8 C2397,187.5 2394,190 2393.5,194 C2393,197 2390,199 2385.5,199.5 C2390,202 2397,202 2400,199 C2403,196 2404,193 2402.8,191.5 Z" fill="#D0D0D0" stroke="#A8A8A8" stroke-width="1.5"/>
<path d="M2421.7,246.5 L2426.2,251.5 L2430.7,246.5" fill="none" stroke="#B0B0B0" stroke-width="1.4" stroke-linecap="round" stroke-linejoin="round"/>
<path d="M2464.5,160.5 L2473,152 L2482.5,161.5 L2474,170 Z" fill="#F0F0F0" stroke="#A8A8A8" stroke-width="1.6"/>
<path d="M2473,152 V149.8 a2,2 0 0 1 3,0 V158" fill="none" stroke="#A8A8A8" stroke-width="1.5"/>
<path d="M2480,157 C2484,154 2485,159 2484.5,166" fill="none" stroke="#A8A8A8" stroke-width="1.6"/>
<rect x="2460" y="171" width="28" height="6.5" fill="#BBBBBB"/>
<path d="M2660.0,163.3 L2664.5,168.3 L2669.0,163.3" fill="none" stroke="#B0B0B0" stroke-width="1.4" stroke-linecap="round" stroke-linejoin="round"/>
<path d="M2462.5,213 V197.5 H2476 M2462.5,213 H2466" fill="none" stroke="#A8A8A8" stroke-width="1.6"/>
<path d="M2486,197 a2.2,2.2 0 0 0 -3.1,-0.3 L2470.5,209 L2468.5,213.5 L2473,211.5 L2485.3,199.3 Z" fill="#EEEEEE" stroke="#A8A8A8" stroke-width="1.5"/>
<rect x="2460" y="216" width="28" height="6.5" fill="#BBBBBB"/>
<path d="M2648.5,208.3 L2653,213.3 L2657.5,208.3" fill="none" stroke="#B0B0B0" stroke-width="1.4" stroke-linecap="round" stroke-linejoin="round"/>
<path d="M2465,244.5 H2481 L2487.5,251 L2481.5,258 H2466 L2460.5,256 Z" fill="#EBEBEB" stroke="#A8A8A8" stroke-width="1.6"/>
<path d="M2460.5,256 L2466,258 H2481.5 L2481.5,264 H2466 L2460.5,259.5 Z" fill="#B0B0B0"/>
<path d="M2460.5,256 V259.5 L2466,264 H2481.5 L2487.5,257.5 V251 M2466,258 V264 M2481.5,258 V264 M2460.5,256 L2466,258 H2481.5 L2487.5,251" fill="none" stroke="#A0A0A0" stroke-width="1.5"/>
<path d="M2481.5,258 L2487.5,251 V257.5 L2481.5,264 Z" fill="#D8D8D8"/>
<path d="M2481.5,258 L2487.5,251 V257.5 L2481.5,264 Z" fill="none" stroke="#A0A0A0" stroke-width="1.4"/>
<path d="M2665.5,252.8 L2670,257.8 L2674.5,252.8" fill="none" stroke="#B0B0B0" stroke-width="1.4" stroke-linecap="round" stroke-linejoin="round"/>
<circle cx="2749.2" cy="160" r="8.3" fill="none" stroke="#404040" stroke-width="1.8"/>
<path d="M2743,166.5 L2732.5,177" fill="none" stroke="#404040" stroke-width="1.8"/>
<text x="2741.00" y="210.00" font-size="17" fill="#B146C2" textLength="9.47" lengthAdjust="spacingAndGlyphs">b</text>
<text x="2748.00" y="223.00" font-size="16" fill="#2B88D8" textLength="8.00" lengthAdjust="spacingAndGlyphs">c</text>
<path d="M2736,204.5 C2731,207 2731,215 2738.5,217.5 H2745 M2742,214.5 L2745.5,217.5 L2742,220.5" fill="none" stroke="#2B88D8" stroke-width="1.6"/>
<path d="M2883.7,207.5 L2888.2,212.5 L2892.7,207.5" fill="none" stroke="#262626" stroke-width="1.7" stroke-linecap="round" stroke-linejoin="round"/>
<path d="M2735,241.5 L2752.5,257 L2745.5,258 L2749.5,266.5 L2745.5,268 L2741.5,259.5 L2735,264.5 Z" fill="none" stroke="#404040" stroke-width="1.7" stroke-linejoin="round"/>
<path d="M2866.0,253.5 L2870.5,258.5 L2875.0,253.5" fill="none" stroke="#262626" stroke-width="1.7" stroke-linecap="round" stroke-linejoin="round"/>
<rect x="2970" y="152" width="48" height="48" fill="none" stroke="#D24A1C" stroke-width="2"/>
<rect x="2975.5" y="157.5" width="16" height="15" fill="none" stroke="#D24A1C" stroke-width="2"/>
<rect x="2996.8" y="157.5" width="16" height="15" fill="none" stroke="#D24A1C" stroke-width="2"/>
<rect x="2975.5" y="178.5" width="16" height="15" fill="none" stroke="#D24A1C" stroke-width="2"/>
<rect x="2996.8" y="178.5" width="16" height="15" fill="none" stroke="#D24A1C" stroke-width="2"/>
<path d="M3787,297.5 L3795.5,289 L3804,297.5" fill="none" stroke="#333333" stroke-width="1.7"/>
<path d="M170.5,2047.2 H160 V2066.6 H171 M170.5,2047.2 V2057 M170.5,2047.2 H180.6 V2056" fill="none" stroke="#333333" stroke-width="1.7"/>
<path d="M172.5,2058 L182.8,2068.3 M182.8,2058 L172.5,2068.3" fill="none" stroke="#333333" stroke-width="1.7"/>
<circle cx="424.5" cy="2048.6" r="2.9" fill="none" stroke="#333333" stroke-width="1.6"/>
<path d="M413,2052.5 C414,2050 418,2053 424.5,2053 C431,2053 434,2050 436,2052.5 C436.5,2054 433,2055 429,2056 V2061" fill="none" stroke="#333333" stroke-width="1.6" stroke-linecap="round"/>
<path d="M420,2056 C420,2060 416,2062 417,2066.5 C418,2069 421,2068 421,2066" fill="none" stroke="#333333" stroke-width="1.6" stroke-linecap="round"/>
<path d="M428,2063.5 L431,2066.7 L437.5,2060" fill="none" stroke="#333333" stroke-width="1.6"/>
<path d="M2906.4,2049.6 L2912,2044.4 L2917.7,2049.6" fill="none" stroke="#333333" stroke-width="1.6"/>
<path d="M2897.9,2056.3 H2925.8 M2897.9,2062.8 H2925.8 M2897.9,2070.1 H2925.8" fill="none" stroke="#333333" stroke-width="1.6"/>
<path d="M3034,2045.8 H3056.3 V2062 H3043 L3037,2067.5 V2062 H3034 Z" fill="none" stroke="#333333" stroke-width="1.7" stroke-linejoin="round"/>
<path d="M3228.6,2047.7 H3251.1 V2065.9 H3228.6 Z M3232.8,2047.7 V2065.9 M3232.8,2061.5 H3251.1" fill="none" stroke="#333333" stroke-width="1.6"/>
<path d="M3238.5,2052 H3246 V2055.5 H3238.5 Z" fill="none" stroke="#333333" stroke-width="1.4"/>
<rect x="3298.6" y="2047.5" width="8.5" height="8.5" fill="none" stroke="#333333" stroke-width="1.6"/>
<rect x="3313.2" y="2047.5" width="8.5" height="8.5" fill="none" stroke="#333333" stroke-width="1.6"/>
<rect x="3298.6" y="2058" width="8.5" height="8.5" fill="none" stroke="#333333" stroke-width="1.6"/>
<rect x="3313.2" y="2058" width="8.5" height="8.5" fill="none" stroke="#333333" stroke-width="1.6"/>
<path d="M3379.5,2048.5 C3376,2046 3372,2045.8 3368.8,2046 V2064.3 C3372,2064 3376,2064.3 3379.5,2066 C3383,2064.3 3387,2064 3390.1,2064.3 V2046 C3387,2045.8 3383,2046 3379.5,2048.5 Z M3379.5,2048.5 V2066" fill="none" stroke="#333333" stroke-width="1.6"/>
<path d="M3372,2050.5 H3377 M3372,2054 H3377 M3372,2057.5 H3377 M3372,2061 H3377 M3382,2050.5 H3387 M3382,2054 H3387 M3382,2057.5 H3387 M3382,2061 H3387" fill="none" stroke="#333333" stroke-width="1.2"/>
<path d="M3438.3,2045.8 H3460.4 M3440.5,2045.8 V2057.5 H3458.2 V2045.8 M3449.3,2057.5 V2066 M3443.5,2066.1 H3455" fill="none" stroke="#333333" stroke-width="1.6"/>
<path d="M3445,2051 H3453.5" fill="none" stroke="#333333" stroke-width="1.6"/>
<path d="M3495.9,2056.6 H3509.3" fill="none" stroke="#505050" stroke-width="1.5"/>
<rect x="3520.2" y="2055.8" width="172.8" height="2" fill="#6A6A6A"/>
<rect x="3605.3" y="2052" width="1.5" height="9.5" fill="#6A6A6A"/>
<rect x="3610" y="2047.8" width="9.1" height="18.9" fill="#5E5E5E" rx="1"/>
<path d="M3702.8,2056.8 H3715.9 M3709.35,2050 V2063.7" fill="none" stroke="#505050" stroke-width="1.5"/>
<path d="M3813.5,2049.5 H3824.5 V2062 H3813.5 Z" fill="none" stroke="#333333" stroke-width="1.6"/>
<path d="M3815,2047 L3819,2043.8 L3823,2047 M3815,2064.5 L3819,2067.7 L3823,2064.5 M3810.5,2052 L3807,2055.8 L3810.5,2059.5 M3827.5,2052 L3831,2055.8 L3827.5,2059.5" fill="none" stroke="#333333" stroke-width="1.6"/>
<defs><linearGradient id="wg" x1="0" y1="0" x2="1" y2="1"><stop offset="0" stop-color="#7AE4FF"/><stop offset="1" stop-color="#0A98FF"/></linearGradient><linearGradient id="tv1" x1="0" y1="0" x2="1" y2="1"><stop offset="0" stop-color="#FFFFFF"/><stop offset="1" stop-color="#E0E0E0"/></linearGradient><linearGradient id="cop" x1="0" y1="0" x2="0" y2="1"><stop offset="0" stop-color="#1E9BF0"/><stop offset="0.5" stop-color="#3CC08A"/><stop offset="1" stop-color="#F2C50F"/></linearGradient><linearGradient id="cop2" x1="0" y1="0" x2="0" y2="1"><stop offset="0" stop-color="#B45CF0"/><stop offset="1" stop-color="#F06088"/></linearGradient><linearGradient id="fold" x1="0" y1="0" x2="1" y2="1"><stop offset="0" stop-color="#FFE07A"/><stop offset="1" stop-color="#F5B800"/></linearGradient><linearGradient id="edge1" x1="0" y1="0" x2="1" y2="1"><stop offset="0" stop-color="#35C1F1"/><stop offset="0.5" stop-color="#34D1A4"/><stop offset="1" stop-color="#66EB6E"/></linearGradient><linearGradient id="edge2" x1="0" y1="0" x2="1" y2="1"><stop offset="0" stop-color="#1F8FE0"/><stop offset="1" stop-color="#0C59A4"/></linearGradient><radialGradient id="cloud" cx="0.4" cy="0.3" r="0.8"><stop offset="0" stop-color="#E8F0FF"/><stop offset="1" stop-color="#7FA7E8"/></radialGradient><linearGradient id="sky" x1="0" y1="0" x2="0" y2="1"><stop offset="0" stop-color="#6FA8F0"/><stop offset="0.6" stop-color="#BFE6C8"/><stop offset="1" stop-color="#A8DDB0"/></linearGradient></defs>
<rect x="1510.9" y="2098.7" width="19.4" height="19.4" fill="url(#wg)" rx="1.5"/>
<rect x="1532" y="2098.7" width="19.4" height="19.4" fill="url(#wg)" rx="1.5"/>
<rect x="1510.9" y="2119.6" width="19.4" height="19.4" fill="url(#wg)" rx="1.5"/>
<rect x="1532" y="2119.6" width="19.4" height="19.4" fill="url(#wg)" rx="1.5"/>
<circle cx="1606.3" cy="2116.2" r="9.6" fill="#5A5A5A" stroke="#DCDCDC" stroke-width="2.2"/>
<path d="M1613.2,2123.2 L1620,2130" fill="none" stroke="#DCDCDC" stroke-width="2.6" stroke-linecap="round"/>
<defs><clipPath id="wcl"><path d="M1867,2128 C1867,2107 1885,2097 1909,2097 C1935,2097 1951,2110 1951,2130 C1951,2137 1948,2141 1940,2141 H1880 C1871,2141 1867,2136 1867,2128 Z"/></clipPath></defs>
<g clip-path="url(#wcl)"><rect x="1865" y="2095" width="90" height="50" fill="url(#sky)"/>
<path d="M1895,2105 C1896,2101 1902,2100 1905,2103 C1908,2099 1916,2100 1916,2105 C1920,2105 1921,2109 1918,2110 H1893 C1890,2110 1891,2105 1895,2105 Z" fill="#FFFFFF" opacity="0.85"/>
<path d="M1927,2110 C1929,2107 1934,2108 1935,2110 C1938,2109 1942,2111 1940,2113 H1926 Z" fill="#FFFFFF" opacity="0.8"/>
<circle cx="1901" cy="2115" r="4" fill="#FFE38A"/>
<path d="M1883,2141 C1882,2133 1886,2126 1894,2125 C1894,2121 1900,2118 1905,2120 C1908,2114 1916,2114 1918,2120 C1924,2118 1930,2121 1930,2126 C1938,2124 1946,2128 1948,2134 L1951,2141 Z" fill="#8F97A6"/>
<path d="M1888,2134 C1892,2130 1900,2130 1904,2134 M1910,2131 C1915,2127 1923,2128 1926,2132 M1930,2136 C1934,2132 1942,2133 1945,2137" fill="none"/>
<path d="M1889,2133 C1893,2129.5 1900,2129.5 1904,2133 M1910,2130 C1915,2126.5 1922,2127 1926,2131 M1929,2135 C1934,2131 1941,2132 1945,2136 M1898,2124 C1901,2121 1906,2121 1908,2124" fill="none" stroke="#6F7786" stroke-width="1.2"/>
<path d="M1873,2141 C1876,2130 1882,2118 1888,2106 M1880,2124 C1884,2120 1890,2118 1895,2116 M1927,2127 C1927,2118 1930,2110 1936,2103" fill="none" stroke="#8A5A1E" stroke-width="1.2"/>
<path d="M1868,2122 C1870,2116 1876,2116 1878,2121 C1879,2125 1874,2129 1869,2127 Z M1872,2108 C1875,2102 1881,2103 1882,2108 C1882,2113 1876,2115 1873,2113 Z M1882,2103 C1886,2098 1893,2100 1892,2105 C1891,2109 1885,2110 1883,2108 Z M1887,2117 C1891,2113 1897,2115 1895,2120 C1893,2124 1887,2123 1886,2121 Z" fill="#EBA32E"/>
<path d="M1914,2107 C1916,2101 1922,2100 1924,2105 C1925,2110 1920,2113 1916,2112 Z M1930,2102 C1933,2097 1940,2098 1940,2103 C1940,2108 1934,2109 1931,2107 Z M1936,2112 C1939,2108 1945,2109 1944,2114 C1943,2118 1937,2118 1936,2116 Z" fill="#EBA32E"/>
</g>
<rect x="1981.1" y="2109.2" width="31.2" height="27.5" fill="#6A6A6A" rx="3"/>
<rect x="1991.4" y="2098.8" width="31.5" height="27.9" fill="url(#tv1)" rx="3"/>
<rect x="1991.4" y="2109.2" width="20.9" height="17.5" fill="#C4C4C4" rx="1"/>
<path d="M2066,2103 C2068,2099 2072,2099 2078,2099 H2086 C2080,2101 2078,2106 2076,2112 L2071,2126 C2070,2130 2067,2131 2063,2131 H2062 C2058,2131 2057,2128 2058,2124 Z" fill="url(#cop)"/>
<path d="M2086,2099 C2090,2099 2091,2102 2092,2106 L2096,2109 H2084 Z" fill="#2B5BE0"/>
<path d="M2082,2109 H2095 C2099,2109 2101,2112 2100,2116 L2096,2128 C2095,2131 2092,2133 2088,2133 H2075 C2078,2131 2080,2127 2081,2123 Z" fill="url(#cop2)"/>
<path d="M2066,2130 L2070,2137 H2074 L2073,2131 Z" fill="#F07838"/>
<rect x="2072" y="2127" width="28.5" height="11.6" fill="#000000" rx="2"/>
<text x="2073.50" y="2136.70" font-size="10.5" fill="#FFFFFF" font-weight="700" textLength="24.81" lengthAdjust="spacingAndGlyphs">M365</text>
<path d="M2135,2102 C2135,2100.5 2136,2100 2137.5,2100 H2146 C2148,2100 2149,2101 2150,2102.5 L2151,2103.6 H2175 C2176.3,2103.6 2177,2104.3 2177,2105.6 V2135 C2177,2136.3 2176.3,2136.8 2175,2136.8 H2137 C2135.7,2136.8 2135,2136.3 2135,2135 Z" fill="#E8A800"/>
<path d="M2135,2106 H2175 C2176.3,2106 2177,2106.7 2177,2108 V2135 C2177,2136.3 2176.3,2136.8 2175,2136.8 H2137 C2135.7,2136.8 2135,2136.3 2135,2135 Z" fill="url(#fold)"/>
<path d="M2142,2128 C2142,2126.3 2143.3,2125.2 2145,2125.2 H2166.4 C2168.1,2125.2 2169.4,2126.3 2169.4,2128 V2136.8 H2142 Z" fill="#1A86E0"/>
<rect x="2147.5" y="2129.5" width="16.5" height="1.6" fill="#0F5FB0"/>
<rect x="2150.7" y="2146.1" width="11.3" height="5" fill="#9A9A9A" rx="2.5"/>
<defs><linearGradient id="eb" x1="0" y1="0" x2="0.3" y2="1"><stop offset="0" stop-color="#2AA6EA"/><stop offset="1" stop-color="#0878D8"/></linearGradient><linearGradient id="eg" x1="0" y1="0" x2="1" y2="0.6"><stop offset="0" stop-color="#33C3EE"/><stop offset="0.5" stop-color="#2DC4C8"/><stop offset="1" stop-color="#6EE868"/></linearGradient></defs>
<circle cx="2233" cy="2118" r="21" fill="url(#eb)"/>
<path d="M2228.3,2117.7 C2228.3,2124 2236,2129 2244,2129 C2247,2129 2249,2128.6 2251,2128 C2247,2134.5 2240,2139 2233,2139 C2227,2139 2223.5,2134 2223.3,2128 C2223,2122 2225,2118.5 2228.3,2117.7 Z" fill="#0D56A3"/>
<path d="M2232.7,2113 C2235.5,2113 2237.7,2115 2237.7,2117.7 C2237.7,2119.5 2236.6,2120.8 2236.6,2122.2 C2238,2124.5 2241,2125.2 2243,2125.2 C2247,2125.2 2250,2124.5 2252.5,2123.2 L2253,2128 C2249,2128.8 2247,2129 2244,2129 C2236,2129 2228.3,2124 2228.3,2117.7 C2228.3,2115 2230,2113 2232.7,2113 Z" fill="#1C1C1C"/>
<path d="M2212.3,2113 C2214,2103.5 2222.5,2096.9 2233,2096.9 C2245,2096.9 2254.1,2106 2254.1,2115.5 C2254.1,2119 2253.5,2121.5 2252.5,2123.2 C2250,2124.5 2247,2125.2 2243,2125.2 C2241,2125.2 2238,2124.5 2236.6,2122.2 C2236.6,2120.8 2237.7,2119.5 2237.7,2117.7 C2237.7,2115 2236.5,2113 2235.9,2111.8 C2231,2107 2219,2105 2212.3,2113 Z" fill="url(#eg)"/>
<rect x="2227.8" y="2146.1" width="11.4" height="5" fill="#9A9A9A" rx="2.5"/>
<circle cx="2312" cy="2117.8" r="18.3" fill="#D35230"/>
<path d="M2312,2099.5 A18.3,18.3 0 0 1 2330.3,2117.8 H2312 Z" fill="#FF8F6B"/>
<path d="M2293.7,2117.8 A18.3,18.3 0 0 1 2312,2099.5 V2117.8 Z" fill="#ED6C47"/>
<rect x="2288.7" y="2107" width="21" height="21" fill="#C43E1C" rx="2"/>
<text x="2294.00" y="2123.50" font-size="17" fill="#FFFFFF" font-weight="700" textLength="10.40" lengthAdjust="spacingAndGlyphs">P</text>
<rect x="2295.7" y="2146.1" width="28.6" height="5" fill="#4CC2FF" rx="2.5"/>
<path d="M38.5,2126.5 C35,2126.5 33.9,2123 33.9,2119.5 C33.9,2114.5 37,2111 42.5,2111 C43.5,2104 47.5,2099.8 53.5,2099.8 C60,2099.8 64,2104 65,2110 C71,2110 76,2113 76,2119.5 C76,2124 73,2126.5 70,2126.5 Z" fill="url(#cloud)"/>
<circle cx="67.4" cy="2100.1" r="13.7" fill="#F8939E"/>
<text x="63.50" y="2106.50" font-size="17" fill="#1C1C1C" textLength="7.39" lengthAdjust="spacingAndGlyphs">2</text>
<path d="M3368.8,2122.6 L3378.2,2113.2 L3387.6,2122.6" fill="none" stroke="#FFFFFF" stroke-width="2"/>
<path d="M3423,2128 C3418,2128 3418,2118 3424,2117 C3426,2108 3438,2106 3443,2114 C3447,2114 3449,2120 3446,2124 L3440,2130 Z" fill="#D8D8D8"/>
<circle cx="3440" cy="2124" r="8" fill="#1F7FE0"/>
<rect x="3439" y="2122" width="2" height="6.5" fill="#FFFFFF"/>
<rect x="3439" y="2118.8" width="2" height="2" fill="#FFFFFF"/>
<path d="M3503,2104 C3490,2108 3480,2118 3478,2131.5 C3484,2126 3496,2120 3503,2104 Z" fill="#9A58D8"/>
<path d="M3500,2108 C3492,2114 3486,2120 3482,2126 C3490,2122 3498,2116 3500,2108 Z" fill="#D0A8F0"/>
<path d="M3627,2104.8 H3612 a2,2 0 0 0 -2,2 V2121.5 a2,2 0 0 0 2,2 H3629 M3617,2123.5 V2131 M3624,2123.5 V2131 M3613.5,2131 H3630" fill="none" stroke="#FFFFFF" stroke-width="1.8"/>
<rect x="3629" y="2104.8" width="7" height="9" fill="none" rx="2" stroke="#FFFFFF" stroke-width="1.8"/>
<path d="M3633.5,2114 V2131.5" fill="none" stroke="#FFFFFF" stroke-width="1.8"/>
<path d="M3652,2113 H3657 L3664,2107 V2129 L3657,2123 H3652 Z" fill="none" stroke="#FFFFFF" stroke-width="1.8" stroke-linejoin="round"/>
<path d="M3668,2114 C3670,2116 3670,2120 3668,2122 M3672,2110 C3676,2114 3676,2122 3672,2126 M3676,2106 C3682,2112 3682,2124 3676,2130" fill="none" stroke="#FFFFFF" stroke-width="1.8"/>
</svg></body></html>
